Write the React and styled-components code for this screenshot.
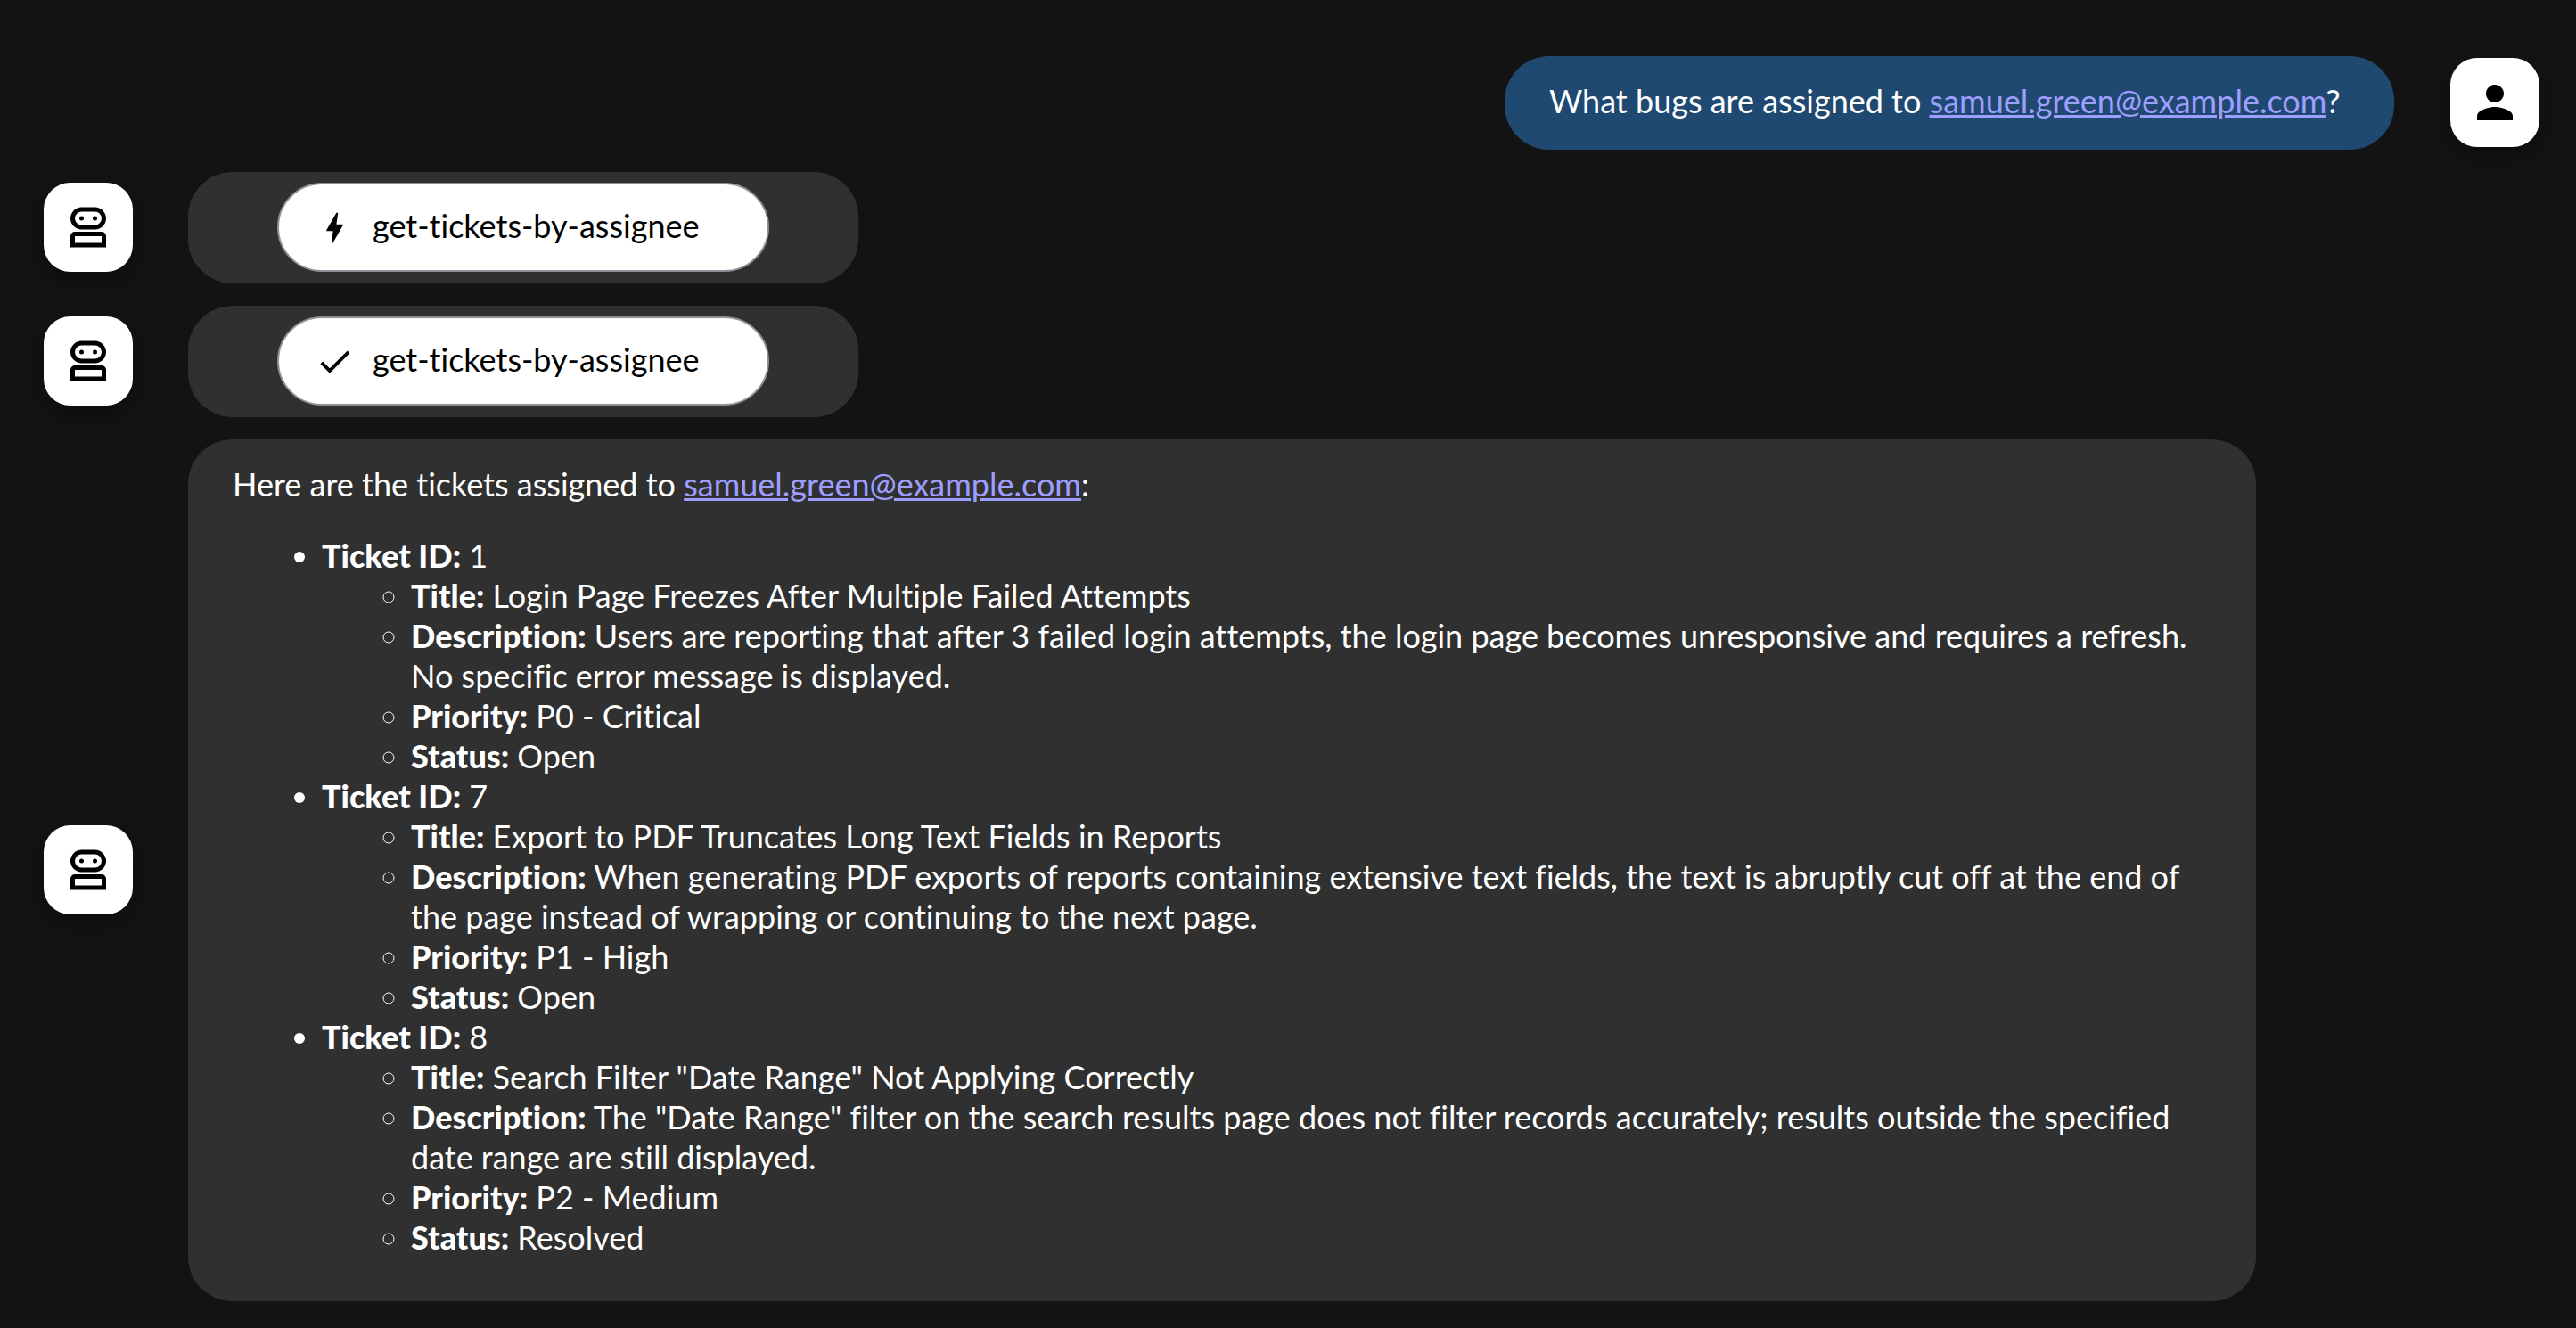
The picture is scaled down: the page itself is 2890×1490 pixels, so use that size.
import React from "react";
import styled, { createGlobalStyle } from "styled-components";

const GlobalStyle = createGlobalStyle`
  * {
    box-sizing: border-box;
  }
  body {
    margin: 0;
    background: #131313;
    color: #fff;
    font-family: Lato, "Open Sans", sans-serif;
    font-size: 36px;
    line-height: 45px;
    font-variant-ligatures: none;
  }
`;

const Chat = styled.main`
  display: flex;
  flex-direction: column;
  gap: 25px;
  padding: 63px 41px 30px 49px;
`;

const Row = styled.article`
  display: flex;
  align-items: center;
  justify-content: ${(p) => (p.$user ? "flex-end" : "flex-start")};
  gap: ${(p) => (p.$user ? 63 : 62)}px;
`;

const Avatar = styled.button`
  flex: none;
  display: grid;
  place-items: center;
  width: 100px;
  height: 100px;
  margin: 0 0 2px;
  padding: 0;
  border: 0;
  border-radius: 30px;
  background: #fff;
  color: #000;
  box-shadow:
    0 8px 12px -2px rgba(0, 0, 0, 0.2),
    0 10px 25px rgba(0, 0, 0, 0.14);
`;

const Glyph = styled.svg`
  display: block;
  flex: none;
  width: ${(p) => p.$size}px;
  height: ${(p) => p.$size}px;
  fill: currentColor;
`;

const Bubble = styled.div`
  max-width: calc(80% + 80px);
  padding: 28px 50px 32px;
  border-radius: 50px;
  background: #303030;
`;

const UserBubble = styled(Bubble)`
  min-width: 998px;
  background: #1f4971;
`;

const ToolBubble = styled(Bubble)`
  padding: 12px 100px 13px;
`;

const ToolButton = styled.button`
  display: flex;
  align-items: center;
  gap: 20px;
  min-width: 552px;
  height: 100px;
  padding: 0 60px 0 40px;
  border: 2px solid #8e9099;
  border-radius: 50px;
  background: #fff;
  color: #000;
  font: inherit;
  font-variant-ligatures: none;
`;

const ToolName = styled.span`
  padding-bottom: 3px;
`;

const Paragraph = styled.p`
  margin: 0;
`;

const MailLink = styled.a`
  color: #9e9eff;
  text-decoration: underline;
  text-decoration-thickness: 3px;
`;

const TicketList = styled.ul`
  margin: 35px 0 17px;
  padding-left: 100px;
  list-style: disc;
`;

const FieldList = styled.ul`
  margin: 0;
  padding-left: 100px;
  list-style: circle;
`;

const Name = styled.strong`
  font-weight: 900;
`;

const EMAIL = "samuel.green@example.com";

const TICKETS = [
  {
    id: 1,
    fields: [
      ["Title", "Login Page Freezes After Multiple Failed Attempts"],
      [
        "Description",
        "Users are reporting that after 3 failed login attempts, the login page becomes unresponsive and requires a refresh. No specific error message is displayed.",
      ],
      ["Priority", "P0 - Critical"],
      ["Status", "Open"],
    ],
  },
  {
    id: 7,
    fields: [
      ["Title", "Export to PDF Truncates Long Text Fields in Reports"],
      [
        "Description",
        "When generating PDF exports of reports containing extensive text fields, the text is abruptly cut off at the end of the page instead of wrapping or continuing to the next page.",
      ],
      ["Priority", "P1 - High"],
      ["Status", "Open"],
    ],
  },
  {
    id: 8,
    fields: [
      ["Title", 'Search Filter "Date Range" Not Applying Correctly'],
      [
        "Description",
        'The "Date Range" filter on the search results page does not filter records accurately; results outside the specified date range are still displayed.',
      ],
      ["Priority", "P2 - Medium"],
      ["Status", "Resolved"],
    ],
  },
];

const PATHS = {
  person:
    "M12 12c2.21 0 4-1.79 4-4s-1.79-4-4-4-4 1.79-4 4 1.79 4 4 4zm0 2c-2.67 0-8 1.34-8 4v2h16v-2c0-2.66-5.33-4-8-4z",
  bolt: "M11 21h-1l1-7H7.5c-.58 0-.57-.32-.38-.66.19-.34.05-.08.07-.12C8.48 10.94 10.42 7.54 13 3h1l-1 7h3.5c.49 0 .56.33.47.51l-.07.15C12.96 17.55 11 21 11 21z",
  check: "M9 16.17 4.83 12l-1.42 1.41L9 19 21 7l-1.41-1.41z",
};

function Icon({ name, size }) {
  return (
    <Glyph $size={size} viewBox="0 0 24 24" aria-hidden="true">
      <path d={PATHS[name]} />
    </Glyph>
  );
}

function RobotIcon() {
  return (
    <Glyph $size={60} viewBox="0 0 24 24" aria-hidden="true">
      <path
        fillRule="evenodd"
        d="M9 3h6a5 5 0 0 1 0 10H9A5 5 0 0 1 9 3zm0 2a3 3 0 0 0 0 6h6a3 3 0 0 0 0-6z"
      />
      <circle cx="9" cy="8" r="1" />
      <circle cx="15" cy="8" r="1" />
      <path fillRule="evenodd" d="M4 21v-5a2 2 0 0 1 2-2h12a2 2 0 0 1 2 2v5zm2-5v3h12v-3z" />
    </Glyph>
  );
}

function BotRow({ children }) {
  return (
    <Row>
      <Avatar type="button" aria-label="Agent">
        <RobotIcon />
      </Avatar>
      {children}
    </Row>
  );
}

function ToolCall({ icon, name }) {
  return (
    <BotRow>
      <ToolBubble>
        <ToolButton type="button">
          <Icon name={icon} size={45} />
          <ToolName>{name}</ToolName>
        </ToolButton>
      </ToolBubble>
    </BotRow>
  );
}

function Email() {
  return <MailLink href={`mailto:${EMAIL}`}>{EMAIL}</MailLink>;
}

export default function App() {
  return (
    <>
      <GlobalStyle />
      <Chat>
        <Row $user>
          <UserBubble>
            <Paragraph>
              What bugs are assigned to <Email />?
            </Paragraph>
          </UserBubble>
          <Avatar type="button" aria-label="User">
            <Icon name="person" size={60} />
          </Avatar>
        </Row>
        <ToolCall icon="bolt" name="get-tickets-by-assignee" />
        <ToolCall icon="check" name="get-tickets-by-assignee" />
        <BotRow>
          <Bubble>
            <Paragraph>
              Here are the tickets assigned to <Email />:
            </Paragraph>
            <TicketList>
              {TICKETS.map((ticket) => (
                <li key={ticket.id}>
                  <Name>Ticket ID:</Name> {ticket.id}
                  <FieldList>
                    {ticket.fields.map(([name, value]) => (
                      <li key={name}>
                        <Name>{name}:</Name> {value}
                      </li>
                    ))}
                  </FieldList>
                </li>
              ))}
            </TicketList>
          </Bubble>
        </BotRow>
      </Chat>
    </>
  );
}
